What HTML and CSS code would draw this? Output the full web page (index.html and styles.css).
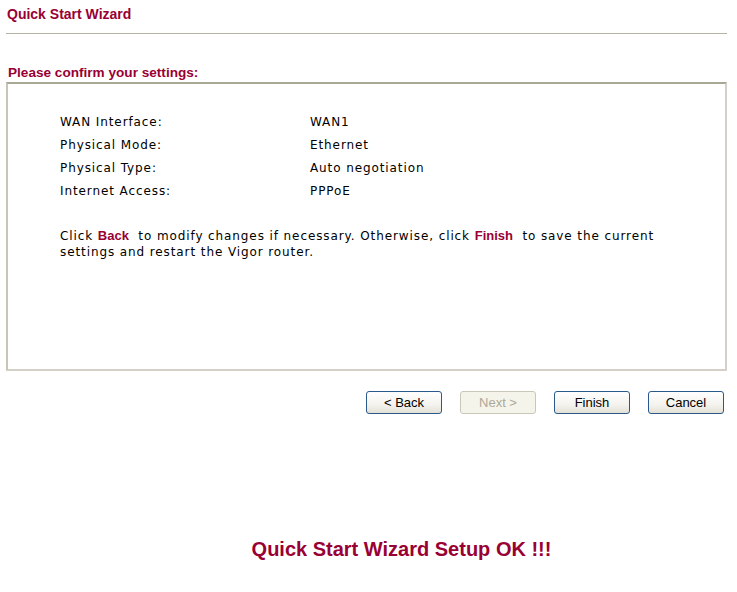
FILE: index.html
```html
<!DOCTYPE html>
<html lang="en">
<head>
  <meta charset="UTF-8">
  <title>Quick Start Wizard</title>
  <link rel="stylesheet" href="styles.css">
</head>
<body>

  <div class="page">
    <div class="title">Quick Start Wizard</div>
    <hr class="rule">

    <div class="section-head">Please confirm your settings:</div>

    <div class="panel">
      <table class="summary">
        <tr><td class="label">WAN Interface:</td><td>WAN1</td></tr>
        <tr><td class="label">Physical Mode:</td><td>Ethernet</td></tr>
        <tr><td class="label">Physical Type:</td><td>Auto negotiation</td></tr>
        <tr><td class="label">Internet Access:</td><td>PPPoE</td></tr>
      </table>

      <p class="note">
        Click <b class="hl">Back</b>&nbsp; to modify changes if necessary. Otherwise, click <b class="hl">Finish</b>&nbsp; to save the current settings and restart the Vigor router.
      </p>
    </div>

    <div class="buttons">
      <button class="btn">&lt; Back</button>
      <button class="btn" disabled>Next &gt;</button>
      <button class="btn">Finish</button>
      <button class="btn">Cancel</button>
    </div>

    <div class="done">Quick Start Wizard Setup OK !!!</div>
  </div>

</body>
</html>
```

FILE: styles.css
```css
body {
  margin: 0;
  background: #ffffff;
  font-family: "DejaVu Sans", Verdana, sans-serif;
  font-size: 12px;
  color: #000;
}
/* === Header === */
.page {
  width: 721px;
  padding: 0 10px 0 6px;
}
.title {
  padding: 6px 0 0 1px;
  font-family: "Liberation Sans", Arial, sans-serif;
  font-size: 14px;
  font-weight: bold;
  color: #990033;
  line-height: 16px;
}
.rule {
  margin: 11px 0 0;
  border: 0;
  height: 1px;
  background: #b5b3a4;
}
.section-head {
  margin: 31px 0 0 2px;
  font-family: "Liberation Sans", Arial, sans-serif;
  font-size: 13.6px;
  font-weight: bold;
  color: #990033;
  line-height: 16px;
}
/* === Settings panel === */
.panel {
  box-sizing: border-box;
  margin-top: 1px;
  height: 289px;
  padding: 26px 40px 14px 52px;
  border: 2px solid #d4d0c8;
  border-top-color: #a9a796;
  border-left-color: #c8c5b5;
  letter-spacing: 0.9px;
}
.summary {
  border-collapse: collapse;
}
.summary td {
  padding: 0;
  height: 23px;
}
.summary .label {
  width: 250px;
}
.note {
  margin: 26px 0 0;
  line-height: 16px;
}
.hl {
  font-family: "Liberation Sans", Arial, sans-serif;
  font-size: 13px;
  letter-spacing: 0;
  color: #990033;
}
/* === Buttons === */
.buttons {
  display: flex;
  justify-content: flex-end;
  gap: 18px;
  margin-top: 20px;
  padding-right: 3px;
}
.btn {
  width: 76px;
  height: 23px;
  padding: 0;
  font-family: "Liberation Sans", Tahoma, sans-serif;
  font-size: 13px;
  color: #000;
  background: linear-gradient(#ffffff, #f4f3ee 60%, #e3e1d6);
  border: 1px solid #2b5a8a;
  border-radius: 3px;
}
.btn:disabled {
  color: #aca899;
  background: #f5f4ea;
  border-color: #c9c7ba;
}
.done {
  margin-top: 124px;
  padding-left: 70px;
  text-align: center;
  font-family: "Liberation Sans", Arial, sans-serif;
  font-size: 20px;
  font-weight: bold;
  color: #990033;
}
```
